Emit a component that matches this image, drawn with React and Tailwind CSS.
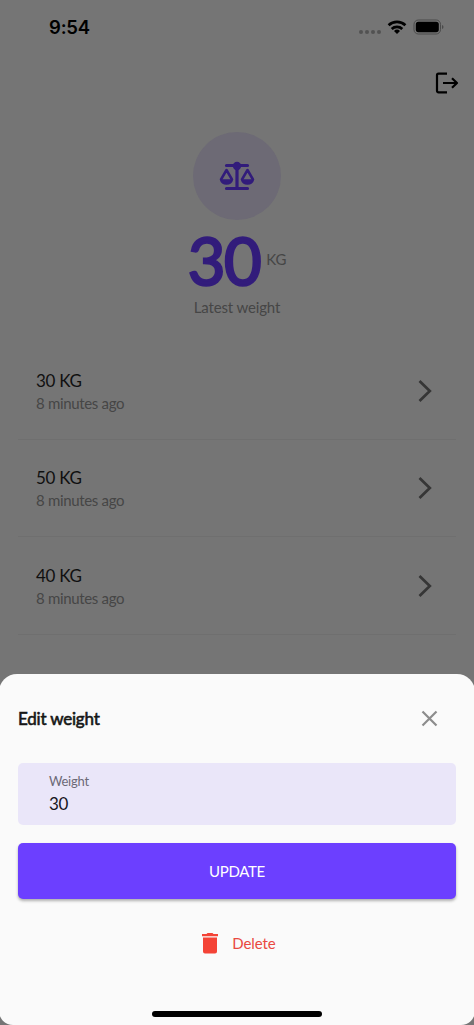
import React, { useState } from 'react';

const initialWeights = [
  { id: 1, value: 30, date: '8 minutes ago' },
  { id: 2, value: 50, date: '8 minutes ago' },
  { id: 3, value: 40, date: '8 minutes ago' },
];

const StatusBar = () => (
  <div className="flex h-[54px] items-center justify-between pl-[49px] pr-[30px]">
    <span className="font-[Inter,sans-serif] text-[18.5px] leading-none font-semibold tracking-[-0.2px]">9:54</span>
    <div className="flex items-center">
      <svg width="24" height="6" viewBox="0 0 24 6" fill="#525252" className="mt-[9px]">
        <circle cx="3" cy="3" r="2" />
        <circle cx="9" cy="3" r="2" />
        <circle cx="15" cy="3" r="2" />
        <circle cx="21" cy="3" r="2" />
      </svg>
      <svg width="20" height="15" viewBox="0 0 20 15" fill="none" stroke="#000" strokeWidth="2.7" className="ml-[5px]">
        <path d="M1.6 5.3a12.2 12.2 0 0 1 16.8 0M4.7 8.9a7.7 7.7 0 0 1 10.6 0" />
        <path d="M10 14l-3-3a4.4 4.4 0 0 1 6 0z" fill="#000" stroke="none" />
      </svg>
      <svg width="31" height="16" viewBox="0 0 31 16" className="ml-[6px]">
        <rect x="1" y="1" width="26.5" height="14" rx="4.3" fill="none" stroke="#4a4a4a" />
        <rect x="2.8" y="2.8" width="23" height="10.4" rx="2.6" />
        <path d="M29 6c2 .8 2 3.2 0 4z" fill="#4a4a4a" />
      </svg>
    </div>
  </div>
);

const LogoutIcon = () => (
  <svg width="24" height="22" viewBox="0 0 24 22" fill="none" stroke="#000" strokeWidth="2.2" strokeLinejoin="round">
    <path d="M12 1.7H3.5a1.5 1.5 0 0 0-1.5 1.5v15.6a1.5 1.5 0 0 0 1.5 1.5H12" />
    <path d="M8 11h14M17 6.2l5 4.8-5 4.8" />
  </svg>
);

const ScaleIcon = () => (
  <svg width="36" height="30" viewBox="0 0 36 30" fill="none" stroke="#321c7b" strokeWidth="3.2" strokeLinecap="round" strokeLinejoin="round">
    <path d="M7.5 4.5h21M18 4.5v22M7.5 27.5h21" />
    <circle cx="18" cy="5" r="4.2" fill="#321c7b" stroke="none" />
    <path d="M7.5 9L2 18.5q1 4 5.5 4t5.5-4zM28.5 9L23 18.5q1 4 5.5 4t5.5-4z" strokeWidth="2.5" />
    <path d="M2 18.5h11q-1 4-5.5 4t-5.5-4zM23 18.5h11q-1 4-5.5 4t-5.5-4z" fill="#321c7b" strokeWidth="0.5" />
  </svg>
);

const WeightItem = ({ weight }) => (
  <li className="flex h-[97.5px] items-center justify-between border-b border-[#6f6f6f] pr-[24px] pl-[18px]">
    <div className="pt-[2px]">
      <p className="text-[17px] leading-[23px] tracking-[-0.3px] text-[#101010]">{weight.value} KG</p>
      <p className="text-[15px] leading-[22px] tracking-[-0.33px] text-[#464646]">{weight.date}</p>
    </div>
    <svg width="14" height="24" viewBox="0 0 14 24" fill="none" stroke="#363636" strokeWidth="2.7" className="mt-px">
      <path d="M1.5 2l10.3 10L1.5 22" />
    </svg>
  </li>
);

const EditSheet = ({ value, onChange }) => (
  <section className="-mx-px h-[351px] rounded-t-[18px] rounded-b-[14px] bg-[#fafafa] px-[19px]">
    <div className="flex h-[89px] items-center justify-between pr-[18px]">
      <h2 className="text-[17px] tracking-[-0.2px] text-[#161616] [-webkit-text-stroke:0.6px_#161616]">Edit weight</h2>
      <button aria-label="Close">
        <svg width="17" height="17" viewBox="0 0 17 17" fill="none" stroke="#8c8c8c" strokeWidth="2.2">
          <path d="M1.5 1.5l14 14M15.5 1.5l-14 14" />
        </svg>
      </button>
    </div>
    <label className="block h-[62px] rounded-[5px] bg-[#eae6f9] px-[31px] pt-[9px]">
      <span className="block text-[13px] leading-[18px] tracking-[-0.25px] text-[#6c6976]">Weight</span>
      <input
        value={value}
        onChange={(e) => onChange(e.target.value)}
        className="mt-px block h-[25px] w-full bg-transparent text-[17px] tracking-[-0.3px] text-[#17151c] outline-none"
      />
    </label>
    <button className="mt-[18px] block h-[56px] w-full rounded-[5px] bg-[#6c3fff] text-[15px] tracking-[-0.3px] text-white shadow-[0_2px_3px_rgba(0,0,0,0.3)]">
      UPDATE
    </button>
    <button className="mx-auto mt-[32px] flex h-[24px] items-center gap-[14px] pl-[4px] text-[15px] text-[#e94840]">
      <svg width="16" height="21" viewBox="0 0 16 21" fill="#f44336">
        <path d="M4.5 1L5.5 0h5l1 1H16v2.3H0V1zM1 4.5h14v14a2 2 0 0 1-2 2H3a2 2 0 0 1-2-2z" />
      </svg>
      <span className="pt-px tracking-[-0.1px]">Delete</span>
    </button>
    <div className="mx-auto mt-[56px] h-[6px] w-[170px] rounded-full bg-black" />
  </section>
);

const App = () => {
  const [weights] = useState(initialWeights);
  const [draft, setDraft] = useState('30');

  return (
    <div className="flex h-[1025px] w-[474px] flex-col justify-between overflow-hidden bg-[#757575] font-[Lato,sans-serif]">
      <main>
        <StatusBar />
        <div className="flex h-[58px] items-center justify-end pr-[15px]">
          <button aria-label="Log out">
            <LogoutIcon />
          </button>
        </div>
        <div className="flex flex-col items-center pt-[20px]">
          <div className="flex size-[88px] items-center justify-center rounded-full bg-[#6d6a75]">
            <ScaleIcon />
          </div>
          <div className="flex h-[76px] items-center gap-[6px]">
            <span className="pt-[3px] text-[65px] leading-[76px] tracking-[-1.4px] text-[#321c7b] [-webkit-text-stroke:2.4px_#321c7b]">
              {weights[0].value}
            </span>
            <span className="pt-[2px] text-[15px] tracking-[-0.1px] text-[#464646]">KG</span>
          </div>
          <p className="text-[15px] leading-[22px] tracking-[-0.15px] text-[#464646]">Latest weight</p>
        </div>
        <ul className="mt-[24px] px-[18px]">
          {weights.map((weight) => (
            <WeightItem key={weight.id} weight={weight} />
          ))}
        </ul>
      </main>
      <EditSheet value={draft} onChange={setDraft} />
    </div>
  );
};

export default App;
